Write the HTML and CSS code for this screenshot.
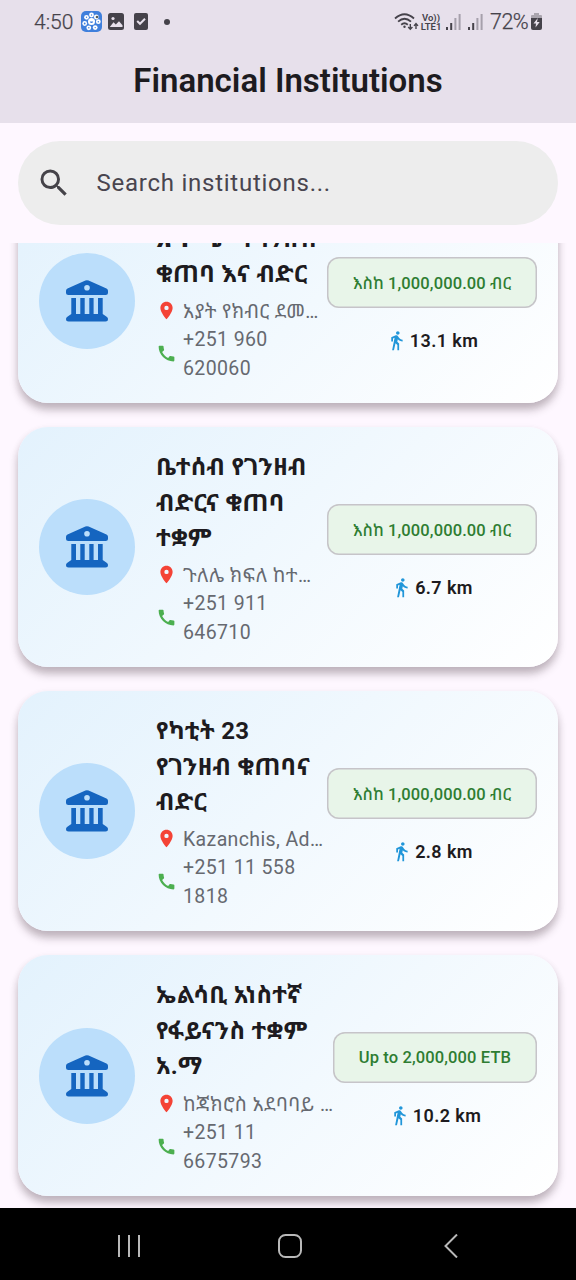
FILE: index.html
```html
<!DOCTYPE html>
<html lang="am">
<head>
<meta charset="utf-8">
<title>Financial Institutions</title>
<link rel="stylesheet" href="styles.css">
</head>
<body>
<svg class="defs" aria-hidden="true">
  <symbol id="bank" viewBox="0 0 42 42"><path fill-rule="evenodd" d="M19.4.6Q21-.2 22.600 .6L40.500 8.500Q42 9.300 42 10.800V12.500Q42 15 39.500 15H2.500Q0 15 0 12.500V10.800Q0 9.300 1.500 8.500ZM21 4.900a2.800 2.800 0 1 0 0 5.600a2.800 2.800 0 1 0 0-5.600ZM5.300 18H10V34H14.300V18H18.700V34H23.300V18H27.600V34H32V18H36.700V34L41 37Q42 37.800 42 39Q42 41.500 39.500 41.500H2.500Q0 41.500 0 39Q0 37.800 1 37L5.300 34Z"/></symbol>
  <symbol id="pin" viewBox="0 0 24 24"><path d="M12 2C8.130 2 5 5.130 5 9c0 5.250 7 13 7 13s7-7.750 7-13c0-3.870-3.130-7-7-7zm0 9.500a2.500 2.500 0 0 1 0-5 2.500 2.500 0 0 1 0 5z"/></symbol>
  <symbol id="phone" viewBox="0 0 24 24"><path d="M20.010 15.380c-1.230 0-2.420-.2-3.530-.56a.977.977 0 0 0-1.010.24l-1.570 1.970c-2.830-1.350-5.480-3.900-6.890-6.830l1.950-1.660c.27-.28.35-.67.24-1.020-.37-1.110-.56-2.300-.56-3.530 0-.54-.45-.99-.99-.99H4.190C3.650 3 3 3.240 3 3.990 3 13.280 10.730 21 20.010 21c.71 0 .99-.63.99-1.180v-3.450c0-.54-.45-.99-.99-.99z"/></symbol>
  <symbol id="walk" viewBox="0 0 24 24"><path d="M13.500 5.500c1.100 0 2-.9 2-2s-.9-2-2-2-2 .9-2 2 .9 2 2 2zM9.800 8.900L7 23h2.100l1.800-8 2.100 2v6h2v-7.500l-2.100-2 .6-3C14.800 12 16.800 13 19 13v-2c-1.900 0-3.500-1-4.300-2.400l-1-1.600c-.4-.6-1-1-1.700-1-.3 0-.5.1-.8.1L6 8.300V13h2V9.600l1.800-.7"/></symbol>
  <symbol id="signal" viewBox="0 0 15 16"><path d="M0 13h2v3H0zM4.200 9h2v7h-2z"/><path opacity=".4" d="M8.400 4h2v12h-2zM12.600 0h2v16h-2z"/></symbol>
</svg>

<header class="header">
  <div class="status">
    <div class="status-left">
      <span class="clock">4:50</span>
      <svg class="app" viewBox="0 0 21 21"><rect width="21" height="21" rx="5" fill="#3f7fdc"/><g fill="#fff"><circle cx="10.500" cy="10.500" r="3.500"/><circle cx="10.500" cy="4" r="2.400"/><circle cx="15.300" cy="6" r="2.400"/><circle cx="17.300" cy="10.700" r="2.400"/><circle cx="14.200" cy="16.600" r="2.400"/><circle cx="7.800" cy="16.800" r="2.400"/><circle cx="3.700" cy="12.500" r="2.400"/><circle cx="5.500" cy="6.300" r="2.400"/></g><g fill="#3f7fdc"><circle cx="10.500" cy="4" r=".7"/><circle cx="16" cy="6" r="1.300" fill="#58605f"/><circle cx="17.300" cy="10.700" r=".7"/><circle cx="14.200" cy="16.600" r=".7"/><circle cx="7.800" cy="16.800" r=".7"/><circle cx="3.700" cy="12.500" r=".9"/><circle cx="5.500" cy="6.300" r=".7"/><path d="M8.800 10.500h3.400q-.4 1.600-1.700 1.600t-1.700-1.600"/></g></svg>
      <svg class="photo" viewBox="0 0 16 17"><rect width="16" height="17" rx="2.500" fill="#45424a"/><circle cx="5" cy="5.500" r="1.600" fill="#e7e0eb"/><path d="M1.800 14L5.500 9.300l2.300 2.200 3.200-3.200 3.500 3.900V14z" fill="#e7e0eb"/></svg>
      <svg class="check" viewBox="0 0 14 17"><rect width="14" height="17" rx="2" fill="#45424a"/><path d="M3.200 8l2.800 2.800L11 5.800" fill="none" stroke="#e7e0eb" stroke-width="2"/></svg>
      <span class="dot"></span>
    </div>
    <div class="status-right">
      <svg class="wifi" viewBox="0 0 25 18"><g fill="none" stroke="#45424a" stroke-width="1.800"><path d="M1 5.500Q10.500-3 20 5.500M4.100 8.700Q10.500 2.700 17 8.700M7.200 11.700Q10.500 8.800 13.800 11.700"/><path stroke-width="1.400" d="M16.300 11v5M14.200 14l2.100 2.300 2.100-2.300M22 16v-5M20 12.900l2-2.300 2 2.300"/></g><circle cx="10.500" cy="13.800" r="1.200" fill="#45424a"/></svg>
      <span class="lte"><span>Vo))</span><span>LTE1</span></span>
      <svg class="signal"><use href="#signal"/></svg>
      <svg class="signal second"><use href="#signal"/></svg>
      <span class="percent">72%</span>
      <svg class="battery" viewBox="0 0 11 17"><path d="M3 0h5v2h2q1 0 1 1v3H0V3q0-1 1-1h2z" fill="#aaa5ae"/><path d="M0 5h11v10q0 2-2 2H2q-2 0-2-2z" fill="#45424a"/><path d="M6.800 5L2.500 10.500H5L4.500 14.500 8.700 9H6z" fill="#e7e0eb"/></svg>
    </div>
  </div>
  <h1 class="title">Financial Institutions</h1>
</header>

<div class="search">
  <svg viewBox="0 0 24 24"><path d="M15.500 14h-.79l-.28-.27A6.471 6.471 0 0 0 16 9.500 6.500 6.500 0 1 0 9.500 16c1.610 0 3.090-.59 4.230-1.570l.27.28v.79l5 4.990L20.490 19l-4.990-5zm-6 0C7.010 14 5 11.990 5 9.500S7.010 5 9.500 5 14 7.010 14 9.500 11.990 14 9.500 14z"/></svg>
  <span>Search institutions...</span>
</div>

<main class="list">
  <article class="card">
    <div class="avatar"><svg><use href="#bank"/></svg></div>
    <div class="info">
      <h2 class="name"><span><b class="wide">አዋጭ</b> የገንዘብ</span><span>ቁጠባ እና ብድር</span></h2>
      <div class="row"><svg class="pin"><use href="#pin"/></svg><span class="lines">አያት የክብር ደመ…</span></div>
      <div class="row"><svg class="phone"><use href="#phone"/></svg><span class="lines">+251 960<br>620060</span></div>
    </div>
    <div class="side">
      <span class="chip am">እስከ 1,000,000.00 ብር</span>
      <span class="distance"><svg><use href="#walk"/></svg>13.1 km</span>
    </div>
  </article>

  <article class="card">
    <div class="avatar"><svg><use href="#bank"/></svg></div>
    <div class="info">
      <h2 class="name"><span>ቤተሰብ የገንዘብ</span><span>ብድርና ቁጠባ</span><span>ተቋም</span></h2>
      <div class="row"><svg class="pin"><use href="#pin"/></svg><span class="lines">ጉለሌ ክፍለ ከተ…</span></div>
      <div class="row"><svg class="phone"><use href="#phone"/></svg><span class="lines">+251 911<br>646710</span></div>
    </div>
    <div class="side">
      <span class="chip am">እስከ 1,000,000.00 ብር</span>
      <span class="distance"><svg><use href="#walk"/></svg>6.7 km</span>
    </div>
  </article>

  <article class="card">
    <div class="avatar"><svg><use href="#bank"/></svg></div>
    <div class="info">
      <h2 class="name"><span>የካቲት 23</span><span>የገንዘብ ቁጠባና</span><span>ብድር</span></h2>
      <div class="row"><svg class="pin"><use href="#pin"/></svg><span class="lines">Kazanchis, Ad…</span></div>
      <div class="row"><svg class="phone"><use href="#phone"/></svg><span class="lines">+251 11 558<br>1818</span></div>
    </div>
    <div class="side">
      <span class="chip am">እስከ 1,000,000.00 ብር</span>
      <span class="distance"><svg><use href="#walk"/></svg>2.8 km</span>
    </div>
  </article>

  <article class="card tall">
    <div class="avatar"><svg><use href="#bank"/></svg></div>
    <div class="info">
      <h2 class="name"><span>ኤልሳቢ አነስተኛ</span><span>የፋይናንስ ተቋም</span><span>አ.ማ</span></h2>
      <div class="row"><svg class="pin"><use href="#pin"/></svg><span class="lines">ከጃክሮስ አደባባይ …</span></div>
      <div class="row"><svg class="phone"><use href="#phone"/></svg><span class="lines">+251 11<br>6675793</span></div>
    </div>
    <div class="side">
      <span class="chip en">Up to 2,000,000 ETB</span>
      <span class="distance"><svg><use href="#walk"/></svg>10.2 km</span>
    </div>
  </article>
</main>

<nav class="navbar">
  <svg viewBox="0 0 24 24"><path d="M2 1v22M12 1v22M22 1v22"/></svg>
  <svg viewBox="0 0 24 24"><rect x="1" y="1" width="22" height="22" rx="6.500"/></svg>
  <svg viewBox="0 0 24 24"><path d="M18 .5L6.500 12 18 23.500"/></svg>
</nav>
</body>
</html>
```

FILE: styles.css
```css
* { box-sizing: border-box; }

body {
  margin: 0;
  width: 576px;
  height: 1280px;
  display: flex;
  flex-direction: column;
  overflow: hidden;
  background: #fef7ff;
  color: #1d1b20;
  font-family: Roboto, "Noto Sans Ethiopic", "Noto Sans", sans-serif;
}

svg { display: block; flex: none; }
.defs { display: none; }

.header {
  height: 123px;
  flex: none;
  background: #e7e0eb;
}

.status {
  height: 43px;
  padding: 0 34px 0 34px;
  display: flex;
  justify-content: space-between;
  align-items: center;
  color: #45424a;
}

.status-left, .status-right { display: flex; align-items: center; }
.clock { width: 47px; font-size: 21px; font-weight: 300; -webkit-text-stroke: 0.25px #45424a; }
.app { width: 21px; height: 21px; }
.photo { width: 16px; height: 17px; margin-left: 6px; }
.check { width: 14px; height: 17px; margin-left: 10px; }
.dot { width: 6px; height: 6px; margin-left: 16px; border-radius: 50%; background: #45424a; }
.wifi { width: 25px; height: 18px; }
.lte { width: 22px; margin: 0 4px 0 1px; display: flex; flex-direction: column; align-items: center; font-size: 9.5px; line-height: 9px; font-weight: 600; white-space: nowrap; }
.signal { width: 15px; height: 16px; fill: #45424a; }
.second { margin-left: 7px; }
.percent { width: 38px; margin-left: 7px; font-size: 21.5px; font-weight: 300; -webkit-text-stroke: 0.25px #45424a; letter-spacing: -0.5px; }
.battery { width: 11px; height: 17px; margin-left: 3px; }

.title {
  margin: 0;
  padding-top: 16px;
  font-size: 33px;
  line-height: 43px;
  font-weight: 600;
  text-align: center;
}

.search {
  flex: none;
  height: 84px;
  margin: 18px 18px;
  padding-left: 18px;
  display: flex;
  align-items: center;
  gap: 24.5px;
  border-radius: 42px;
  background: #ededed;
  color: #49454f;
  font-size: 24px;
  line-height: 26px;
  letter-spacing: 0.75px;
}
.search svg { width: 36px; height: 36px; fill: #454349; }

.list {
  height: 965px;
  flex: none;
  padding: 0 18px 12px;
  display: flex;
  flex-direction: column;
  justify-content: flex-end;
  gap: 24px;
  overflow: hidden;
}

.card {
  flex: none;
  display: flex;
  align-items: center;
  padding: 21px;
  border-radius: 30px;
  background: linear-gradient(135deg, #e3f2fd, #ffffff);
  box-shadow: 0 7px 9px rgba(40, 20, 30, 0.26), 0 3px 8px rgba(40, 20, 30, 0.07);
}

.avatar {
  width: 96px;
  height: 96px;
  flex: none;
  display: grid;
  place-items: center;
  border-radius: 50%;
  background: #bbdefb;
}
.avatar svg { width: 42px; height: 42px; fill: #1565c0; }

.info { flex: 1; min-width: 0; margin-left: 21px; white-space: nowrap; }
.name { margin: 0; padding: 2px 0 4px; font-size: 24px; line-height: 35.5px; font-weight: 700; letter-spacing: 0.3px; }
.name span { display: block; }
.wide { letter-spacing: 5px; }
.tall .name { padding-bottom: 5px; }
.row { display: flex; align-items: center; gap: 6px; }
.row svg { width: 21px; height: 21px; }
.pin { fill: #f44336; }
.phone { fill: #4caf50; }
.lines { padding-top: 1px; margin-bottom: -1px; color: #666970; font-size: 19.5px; line-height: 28.500px; letter-spacing: 0.375px; }

.side { flex: none; display: flex; flex-direction: column; align-items: center; }
.chip {
  height: 51px;
  margin: 10px 0 19px;
  display: grid;
  place-items: center;
  border-radius: 12px;
  box-shadow: inset 0 0 0 1.5px #c6c4c9;
  background: #e8f5e9;
  color: #2e7d32;
  font-size: 16.5px;
  font-weight: 500;
  letter-spacing: 0.12px;
  white-space: nowrap;
}
.am { width: 210px; }
.en { width: 204px; }
.distance { display: flex; align-items: center; gap: 3px; height: 27px; font-size: 18px; font-weight: 600; letter-spacing: 0.4px; }
.distance svg { width: 21px; height: 21px; fill: #2196d9; }

.navbar {
  flex: 1;
  padding: 4px 113px 0 117px;
  display: flex;
  justify-content: space-between;
  align-items: center;
  background: #000;
}
.navbar svg { width: 24px; height: 24px; fill: none; stroke: #b9b9b9; stroke-width: 2; }
```
